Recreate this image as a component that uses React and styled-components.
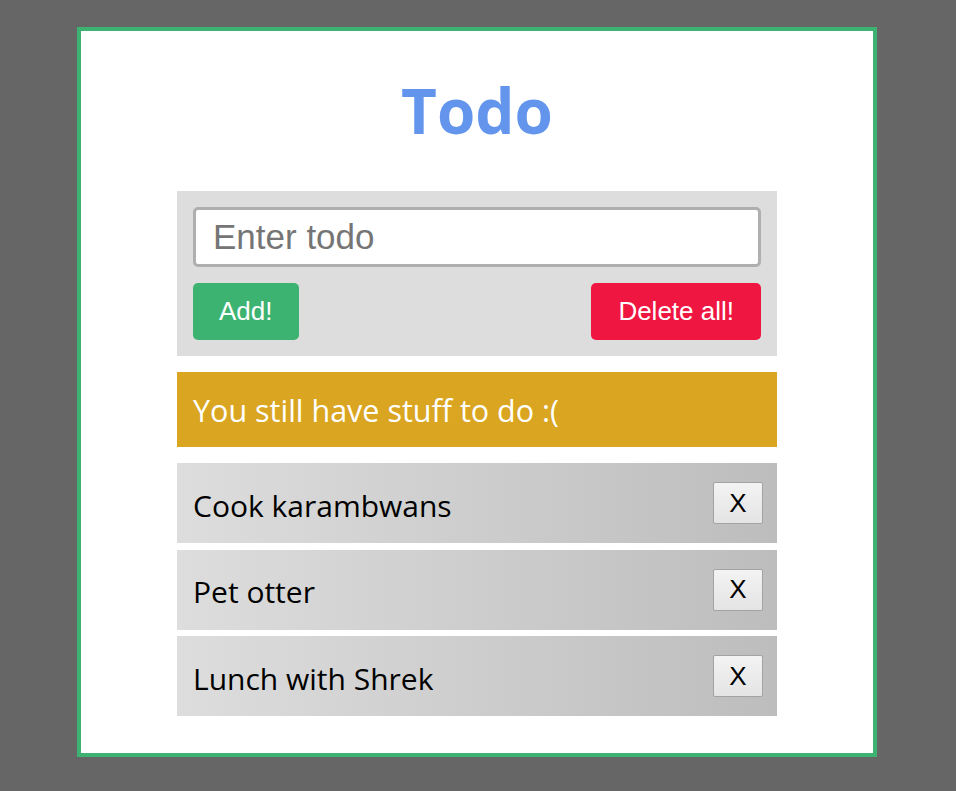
import React, { useState } from 'react';
import styled, { createGlobalStyle } from 'styled-components';

const GlobalStyle = createGlobalStyle`
  html, body {
    margin: 0;
    padding: 0;
    background-color: #666666;
  }
  body {
    min-height: 791px;
    padding-top: 27px;
    box-sizing: border-box;
  }
`;

const initialTodos = [
  { id: 1, text: 'Cook karambwans' },
  { id: 2, text: 'Pet otter' },
  { id: 3, text: 'Lunch with Shrek' },
];

const App = () => {
  const [todos, setTodos] = useState(initialTodos);
  const [value, setValue] = useState('');

  // 할 일 추가
  const addTodo = (event) => {
    event.preventDefault();
    if (value.trim() === '') return;
    setTodos([...todos, { id: Date.now(), text: value }]);
    setValue('');
  };

  const removeTodo = (id) => {
    setTodos(todos.filter((todo) => todo.id !== id));
  };

  return (
    <>
      <GlobalStyle />
      <Card>
        <Title>Todo</Title>
        <Form onSubmit={addTodo}>
          <TodoInput
            type="text"
            placeholder="Enter todo"
            value={value}
            onChange={(e) => setValue(e.target.value)}
          />
          <ButtonRow>
            <ActionButton type="submit" color="#3cb371">
              Add!
            </ActionButton>
            <ActionButton
              type="button"
              color="#ef1641"
              wide
              onClick={() => setTodos([])}
            >
              Delete all!
            </ActionButton>
          </ButtonRow>
        </Form>
        <Status done={todos.length === 0}>
          {todos.length === 0 ? 'All done :)' : 'You still have stuff to do :('}
        </Status>
        <List>
          {todos.map((todo) => (
            <Item key={todo.id}>
              <ItemText>{todo.text}</ItemText>
              <RemoveButton onClick={() => removeTodo(todo.id)}>X</RemoveButton>
            </Item>
          ))}
        </List>
      </Card>
    </>
  );
};

export default App;

// styled component

const Card = styled.main`
  box-sizing: border-box;
  width: 800px;
  min-height: 730px;
  margin: 0 0 0 calc(50% - 401px);
  padding: 45px 96px 37px;
  border: 4px solid #3cb371;
  background-color: #ffffff;
  display: flex;
  flex-direction: column;
`;

const Title = styled.h1`
  margin: 0 0 49px;
  height: 66px;
  font-family: 'Segoe UI', 'Open Sans', sans-serif;
  font-size: 62px;
  line-height: 68px;
  font-weight: bold;
  text-align: center;
  color: #6495ed;
`;

const Form = styled.form`
  display: flex;
  flex-direction: column;
  gap: 16px;
  padding: 16px;
  background-color: #dddddd;
`;

const TodoInput = styled.input`
  box-sizing: border-box;
  width: 100%;
  height: 60px;
  padding: 0 17px;
  border: 3px solid #afafaf;
  border-radius: 5px;
  background-color: #ffffff;
  font-family: 'Liberation Sans', Arial, sans-serif;
  font-size: 35px;
  color: #222222;
  outline: none;
  &::placeholder {
    color: #757575;
  }
`;

const ButtonRow = styled.div`
  display: flex;
  justify-content: space-between;
`;

const ActionButton = styled.button`
  height: 57px;
  padding: 0 ${(props) => (props.wide ? '27px' : '26px')};
  border: none;
  border-radius: 5px;
  background-color: ${(props) => props.color};
  color: #ffffff;
  font-family: 'Liberation Sans', Arial, sans-serif;
  font-size: 26px;
  cursor: pointer;
`;

const Status = styled.div`
  display: flex;
  align-items: center;
  height: 75px;
  margin-top: 16px;
  padding: 0 16px;
  background-color: ${(props) => (props.done ? '#3cb371' : '#daa520')};
  color: #ffffff;
  font-family: 'Segoe UI', 'Open Sans', sans-serif;
  font-size: 30.5px;
`;

const List = styled.ul`
  display: flex;
  flex-direction: column;
  gap: 6.5px;
  margin: 16px 0 0;
  padding: 0;
  list-style: none;
`;

const Item = styled.li`
  display: flex;
  align-items: center;
  justify-content: space-between;
  height: 80px;
  padding: 0 14px 0 16px;
  background: linear-gradient(to right, #dddddd, #bdbdbd);
`;

const ItemText = styled.span`
  padding-top: 4px;
  font-family: 'Segoe UI', 'Open Sans', sans-serif;
  font-size: 30px;
  color: #000000;
`;

const RemoveButton = styled.button`
  width: 50px;
  height: 42px;
  padding: 0;
  border: 1px solid #a3a3a3;
  border-radius: 2px;
  background: linear-gradient(#f3f3f3, #e4e4e4);
  font-family: 'Liberation Sans', Arial, sans-serif;
  font-size: 26px;
  color: #000000;
  cursor: pointer;
`;
